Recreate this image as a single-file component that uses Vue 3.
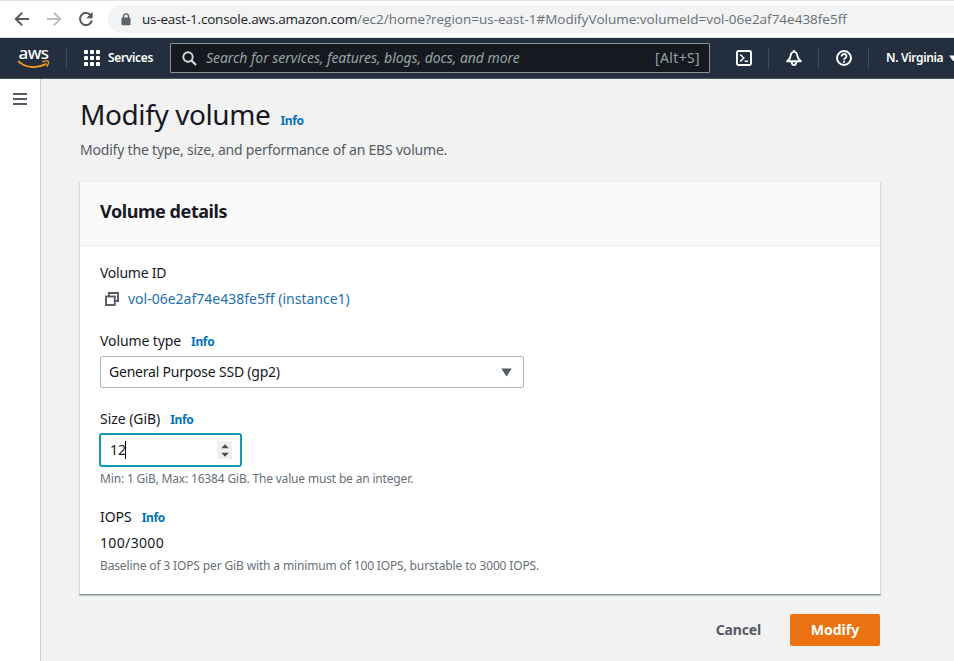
<script setup>
import { ref } from 'vue'

const size = ref('12')
const url = {
  host: 'us-east-1.console.aws.amazon.com',
  path: '/ec2/home?region=us-east-1#ModifyVolume:volumeId=vol-06e2af74e438fe5ff',
}
</script>

<template>
  <div class="page">
    <div class="chrome">
      <svg class="nav-arrow" width="16" height="16" viewBox="0 0 16 16"><path d="M15 8H2M8.2 1.6 1.8 8l6.4 6.4" /></svg>
      <svg class="nav-arrow off" width="16" height="16" viewBox="0 0 16 16"><path d="M1 8h13M7.8 1.6 14.2 8l-6.4 6.4" /></svg>
      <svg class="nav-arrow reload" width="16" height="16" viewBox="0 0 16 16"><path d="M13.2 4.6A6.1 6.1 0 1 0 14 9.6" /><path class="solid" d="M14.6 .9v6.3H8.3z" /></svg>
      <div class="omnibox">
        <svg width="10" height="13" viewBox="0 0 10 13"><path d="M2.5 6V3.4a2.5 2.5 0 0 1 5 0V6" fill="none" stroke="#5f6368" stroke-width="1.4" /><rect x="0.5" y="4.6" width="9" height="7.6" rx="1" fill="#5f6368" /></svg>
        <span class="url"><span class="host">{{ url.host }}</span><span>{{ url.path }}</span></span>
      </div>
    </div>

    <header class="topnav">
      <div class="logo">
        <span class="word">aws</span>
        <svg width="34" height="10" viewBox="0 0 34 10"><path d="M1.6 1.6C9.500 8.300 20.500 8.500 28.600 4.200" fill="none" stroke="#f79b1e" stroke-width="1.9" stroke-linecap="round" /><path d="M26 1.500c2.300-.6 4.600-.7 5.200-.1.600.7-.1 3.100-1.400 4.900" fill="none" stroke="#f79b1e" stroke-width="1.400" stroke-linecap="round" /></svg>
      </div>
      <i class="rule"></i>
      <div class="services">
        <svg width="16" height="16" viewBox="0 0 16 16" fill="#fff">
          <g v-for="r in 3" :key="r"><rect v-for="c in 3" :key="c" :x="(c - 1) * 6" :y="(r - 1) * 6" width="4" height="4" rx=".7" /></g>
        </svg>
        <span>Services</span>
      </div>
      <div class="search">
        <svg width="15" height="15" viewBox="0 0 15 15" fill="none" stroke="#d5dbdb" stroke-width="1.9"><circle cx="6" cy="6" r="4.700" /><path d="m9.500 9.500 4.500 4.500" stroke-width="2.200" /></svg>
        <span class="placeholder">Search for services, features, blogs, docs, and more</span>
        <span class="key">[Alt+S]</span>
      </div>
      <div class="tool shell">
        <svg width="16" height="16" viewBox="0 0 16 16" fill="none" stroke="#fff" stroke-width="1.900"><rect x="1" y="1" width="14" height="14" rx="1.500" /><path d="m4.200 4.500 3.600 3.500-3.600 3.500M8.700 11.300h3.200" stroke-width="1.600" /></svg>
      </div>
      <i class="rule"></i>
      <div class="tool">
        <svg width="16" height="16" viewBox="0 0 16 16" fill="none" stroke="#fff" stroke-width="1.900" stroke-linejoin="round"><path d="M8 1.900c-2.400 0-3.100 1.800-3.300 3.800-.2 2.300-1.400 3.900-3.500 5.500h13.600c-2.100-1.600-3.300-3.200-3.500-5.500-.2-2-.9-3.800-3.300-3.800zM8 0v2M5.700 11.500c0 4.700 4.600 4.700 4.600 0" /></svg>
      </div>
      <i class="rule"></i>
      <div class="tool">
        <svg width="16" height="16" viewBox="0 0 16 16" fill="none" stroke="#fff" stroke-width="1.900"><circle cx="8" cy="8" r="7" /><path d="M5.600 6.500c0-3.300 4.900-3.200 4.900-.3 0 1.800-2.500 1.700-2.500 3.600M8 10.800v1.900" stroke-width="1.800" /></svg>
      </div>
      <i class="rule"></i>
      <div class="region"><span>N. Virginia</span><svg width="9" height="7" viewBox="0 0 9 7"><path d="M0 .5h9L4.500 6.500z" fill="#fff" /></svg></div>
    </header>

    <div class="body">
      <aside class="rail">
        <svg width="14" height="12" viewBox="0 0 14 12"><path d="M0 1h14M0 6h14M0 11h14" stroke="#545b64" stroke-width="2" /></svg>
      </aside>
      <main class="main">
        <div class="heading"><h1>Modify volume</h1><a class="info">Info</a></div>
        <p class="subtitle">Modify the type, size, and performance of an EBS volume.</p>

        <section class="panel">
          <div class="panel-head"><h2>Volume details</h2></div>
          <div class="panel-body">
            <div class="field vid">
              <div class="label l-id">Volume ID</div>
              <div class="link">
                <svg width="14" height="14" viewBox="0 0 14 14" fill="none" stroke="#545b64" stroke-width="1.900"><path d="M4 4V1h9v8h-3" /><rect x="1" y="4.500" width="8.800" height="8.500" /></svg>
                <a>vol-06e2af74e438fe5ff (instance1)</a>
              </div>
            </div>
            <div class="field vtype">
              <div class="row"><span class="label l-type">Volume type</span><a class="info">Info</a></div>
              <div class="select"><span>General Purpose SSD (gp2)</span><svg width="11" height="9" viewBox="0 0 11 9"><path d="M.3.500h10.400L5.500 8.600z" fill="#545b64" /></svg></div>
            </div>
            <div class="field vsize">
              <div class="row"><span class="label">Size (GiB)</span><a class="info">Info</a></div>
              <div class="number">
                <span>{{ size }}</span><i class="caret"></i>
                <div class="spin"><svg width="8" height="13" viewBox="0 0 8 13" fill="#4d4d4d"><path d="M.2 4.300 4 .300 7.800 4.300zM.2 8.700 4 12.700 7.800 8.700z" /></svg></div>
              </div>
              <p class="hint">Min: 1 GiB, Max: 16384 GiB. The value must be an integer.</p>
            </div>
            <div class="field">
              <div class="row"><span class="label">IOPS</span><a class="info">Info</a></div>
              <div class="value">100/3000</div>
              <p class="hint base">Baseline of 3 IOPS per GiB with a minimum of 100 IOPS, burstable to 3000 IOPS.</p>
            </div>
          </div>
        </section>

        <div class="actions"><button class="cancel">Cancel</button><button class="submit">Modify</button></div>
      </main>
    </div>
  </div>
</template>

<style>
body { background: #f2f2f2; overflow: hidden; }
</style>

<style scoped>
* { box-sizing: border-box; }
h1, h2, p { margin: 0; font-weight: 400; }
svg { flex: none; display: block; }
.page { width: 954px; height: 661px; overflow: hidden; display: flex; flex-direction: column; background: #f2f2f2; color: #16191f; font: 14px/22px "Noto Sans", sans-serif; white-space: nowrap; }

.chrome { flex: none; height: 38px; display: flex; align-items: center; padding-left: 14px; background: #fff; border-top: 1px solid #dee1e6; border-bottom: 1px solid #dcdee0; }
.nav-arrow { margin-right: 16px; fill: none; stroke: #55585c; stroke-width: 2; }
.nav-arrow.off { stroke: #bdbec0; }
.nav-arrow.reload { margin-right: 14px; }
.nav-arrow .solid { fill: #55585c; stroke: none; }
.omnibox { flex: 1; height: 28px; display: flex; align-items: center; padding-left: 13px; background: #f1f3f4; border-radius: 14px 0 0 14px; }
.url { margin-left: 11px; color: #6a6e73; font: 13.5px/20px "Open Sans", sans-serif; }
.host { color: #202124; letter-spacing: -0.21px; }

.topnav { flex: none; height: 41px; display: flex; align-items: center; background: #232f3e; border-bottom: 1px solid #4a5460; color: #fff; }
.topnav > * { flex: none; }
.logo { width: 34px; height: 24px; margin-left: 17px; display: flex; flex-direction: column; align-items: center; }
.word { height: 14px; margin-left: -1px; font: 500 17px/13px "Noto Sans", sans-serif; letter-spacing: -0.6px; }
.rule { width: 1px; height: 21px; background: #414d5c; }
.logo + .rule { margin-left: 15px; }
.services { display: flex; align-items: center; margin-left: 17px; width: 86px; font-size: 12px; font-weight: 600; letter-spacing: -0.35px; }
.services span { margin-left: 8px; }
.search { width: 540px; height: 30px; display: flex; align-items: center; padding: 0 9px 0 11px; background: #16191f; border: 1px solid #879596; border-radius: 1px; color: #95a5a6; }
.placeholder { margin-left: 9px; font-style: italic; letter-spacing: -0.06px; }
.key { margin-left: auto; letter-spacing: 0.35px; }
.tool { width: 49px; display: flex; justify-content: center; }
.tool.shell { width: 58px; padding-left: 10px; }
.region { display: flex; align-items: center; margin-left: 17px; font-size: 12px; font-weight: 600; letter-spacing: -0.34px; }
.region svg { margin-left: 6px; }

.body { flex: 1; display: flex; min-height: 0; }
.rail { width: 41px; padding: 14px 0 0 13px; background: #fff; border-right: 1px solid #c9cdcd; }
.main { width: 840px; padding: 17px 0 0 39px; }
.heading { display: flex; align-items: baseline; height: 36px; }
h1 { font-size: 28px; line-height: 36px; letter-spacing: -0.4px; }
.info { margin-left: 10px; color: #0073bb; font-size: 12px; font-weight: 700; letter-spacing: -0.35px; }
.subtitle { margin-top: 7px; color: #545b64; letter-spacing: -0.2px; }
.panel { margin: 20px 0 0 -1px; height: 414px; background: #fff; border: 1px solid #d5dbdb; border-top-color: #eaeded; border-bottom: 1px solid #879596; box-shadow: 0 1px 1px rgba(0, 28, 36, .2); }
.panel-head { height: 64px; padding: 18px 20px; background: #fafafa; border-bottom: 1px solid #eaeded; }
h2 { font-size: 18px; font-weight: 700; letter-spacing: -0.43px; }
.panel-body { padding: 16px 20px 0; }
.label { letter-spacing: -0.05px; }
.label.l-id { letter-spacing: -0.25px; }
.label.l-type { letter-spacing: -0.1px; }
.row { display: flex; align-items: baseline; height: 22px; }
.link { display: flex; align-items: center; margin-top: 4px; padding-left: 5px; }
.link a { margin-left: 9px; color: #236fae; }
.vid { height: 68px; }
.vtype { height: 78px; }
.select { width: 424px; height: 32px; margin-top: 4px; padding: 0 11px 0 8px; display: flex; align-items: center; justify-content: space-between; border: 1px solid #aab7b8; border-radius: 2px; letter-spacing: -0.22px; }
.vsize { height: 98px; }
.number { width: 143px; height: 34px; margin: 3px 0 0 -1px; padding: 0 8px 0 9px; display: flex; align-items: center; border: 2px solid #0f9bb0; border-radius: 3px; }
.caret { width: 1px; height: 18px; margin-left: -1px; background: #000; }
.spin { width: 15px; height: 18px; margin-left: auto; display: flex; align-items: center; justify-content: center; background: #efefef; }
.hint { color: #687078; font-size: 12px; line-height: 16px; margin-top: 4px; letter-spacing: -0.17px; }
.value { margin-top: 4px; letter-spacing: 0.35px; }
.hint.base { letter-spacing: -0.14px; }
.actions { display: flex; justify-content: flex-end; margin-top: 19px; padding-right: 0; }
button { height: 32px; padding: 0; border: 0; border-radius: 2px; background: none; font: 700 14px/22px "Noto Sans", sans-serif; }
.cancel { color: #545b64; margin-right: 29px; letter-spacing: -0.15px; }
.submit { width: 90px; margin-right: 1px; background: #ec7211; color: #fff; }
</style>
